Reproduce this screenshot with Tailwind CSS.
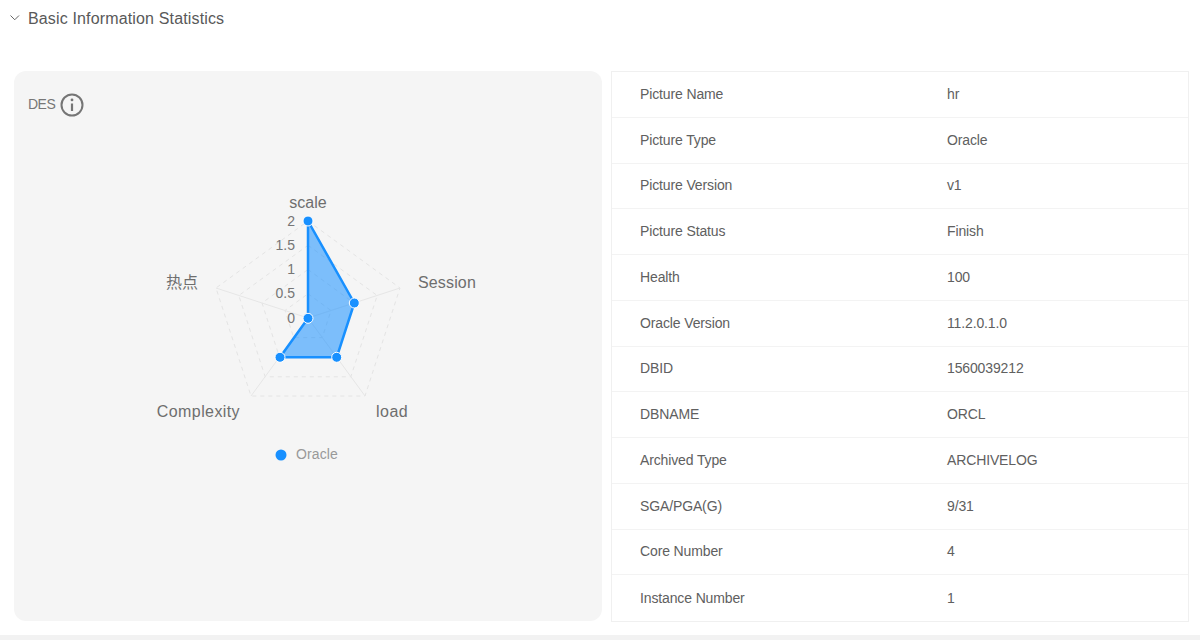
<!DOCTYPE html>
<html lang="en">
<head>
  <meta charset="UTF-8">
  <title>Basic Information Statistics</title>
  <script src="https://cdn.jsdelivr.net/npm/@tailwindcss/browser@4"></script>
</head>
<body class="bg-white h-[640px] overflow-hidden font-['Liberation_Sans','Noto_Sans_CJK_SC',sans-serif] text-[#595959]">
  <!-- Section header -->
  <div class="h-[37px] flex items-center">
    <svg class="ml-[9px] mb-[2px]" width="11" height="8" viewBox="0 0 11 8" fill="none" stroke="#666666" stroke-width="1"><path d="M1.5 1.5 L5.75 5.75 L10 1.5"/></svg>
    <h2 class="ml-[8px] text-[16px] font-normal tracking-[0.15px]">Basic Information Statistics</h2>
  </div>

  <div class="flex mt-[34px] ml-[14px] w-[1175px] h-[550px] gap-[9px]">
    <!-- Radar panel -->
    <div class="w-[588px] bg-[#f5f5f5] rounded-[12px] shrink-0">
      <div class="flex items-center pl-[14px] pt-[22px] h-[45px]">
        <span class="text-[14px] tracking-[-0.5px] text-[#777]">DES</span>
        <svg class="ml-[5px]" width="24" height="24" viewBox="0 0 24 24" fill="none" stroke="#757575" stroke-width="2"><circle cx="12" cy="12" r="10.5"/><path d="M12 10.5 V18" stroke-width="2.2"/><circle cx="12" cy="6.9" r="1.4" fill="#757575" stroke="none"/></svg>
      </div>
      <svg class="block mt-[14px]" width="588" height="360" viewBox="14 130 588 360">
        <!-- Grid rings -->
        <g fill="none" stroke="#e4e4e4" stroke-width="1" stroke-dasharray="4 4">
          <polygon points="308,293.8 331,310.5 322.3,337.6 293.7,337.6 285,310.5"/>
          <polygon points="308,269.5 354,303 336.5,357.2 279.5,357.2 262,303"/>
          <polygon points="308,245.3 377.2,295.5 350.8,376.8 265.2,376.8 238.8,295.5"/>
          <polygon points="308,221 400,288 365,396 251,396 216,288"/>
        </g>
        <!-- Axes -->
        <g stroke="#e6e6e6" stroke-width="1">
          <path d="M308 318 L308 221"/>
          <path d="M308 318 L400 288"/>
          <path d="M308 318 L365 396"/>
          <path d="M308 318 L251 396"/>
          <path d="M308 318 L216 288"/>
        </g>
        <!-- Data -->
        <polygon points="308,221 354.3,303 336.7,357.3 280,357.3 308,318.3" fill="#1890ff" fill-opacity="0.55" stroke="#1890ff" stroke-width="2.5" stroke-linejoin="round"/>
        <g fill="#1890ff" stroke="#ffffff" stroke-width="1">
          <circle cx="308" cy="221" r="5"/>
          <circle cx="354.3" cy="303" r="5"/>
          <circle cx="336.7" cy="357.3" r="5"/>
          <circle cx="280" cy="357.3" r="5"/>
          <circle cx="308" cy="318.3" r="5"/>
        </g>
        <!-- Scale labels -->
        <g fill="#767676" font-size="14" text-anchor="end">
          <text x="295" y="226">2</text>
          <text x="295" y="250">1.5</text>
          <text x="295" y="274">1</text>
          <text x="295" y="298">0.5</text>
          <text x="295" y="323">0</text>
        </g>
        <!-- Axis labels -->
        <g fill="#6e6e6e" font-size="16">
          <text x="308" y="208" text-anchor="middle">scale</text>
          <text x="418" y="288" letter-spacing="0.15">Session</text>
          <text x="376" y="417" letter-spacing="0.5">load</text>
          <text x="240" y="417" text-anchor="end" letter-spacing="0.4">Complexity</text>
          <text x="198" y="288" text-anchor="end">热点</text>
        </g>
        <!-- Legend -->
        <circle cx="281" cy="455" r="5.5" fill="#1890ff"/>
        <text x="296" y="459" font-size="14" letter-spacing="0.1" fill="#999999">Oracle</text>
      </svg>
    </div>

    <!-- Info table -->
    <div class="w-[578px] h-[551px] shrink-0 border border-[#f0f0f0] grid grid-rows-12 divide-y divide-[#f3f3f3] text-[14px] tracking-[-0.13px] text-[#606060]">
      <div class="flex items-center pl-[28px]"><span class="w-[307px]">Picture Name</span><span>hr</span></div>
      <div class="flex items-center pl-[28px]"><span class="w-[307px]">Picture Type</span><span>Oracle</span></div>
      <div class="flex items-center pl-[28px]"><span class="w-[307px]">Picture Version</span><span>v1</span></div>
      <div class="flex items-center pl-[28px]"><span class="w-[307px]">Picture Status</span><span>Finish</span></div>
      <div class="flex items-center pl-[28px]"><span class="w-[307px]">Health</span><span>100</span></div>
      <div class="flex items-center pl-[28px]"><span class="w-[307px]">Oracle Version</span><span>11.2.0.1.0</span></div>
      <div class="flex items-center pl-[28px]"><span class="w-[307px]">DBID</span><span>1560039212</span></div>
      <div class="flex items-center pl-[28px]"><span class="w-[307px]">DBNAME</span><span>ORCL</span></div>
      <div class="flex items-center pl-[28px]"><span class="w-[307px]">Archived Type</span><span>ARCHIVELOG</span></div>
      <div class="flex items-center pl-[28px]"><span class="w-[307px]">SGA/PGA(G)</span><span>9/31</span></div>
      <div class="flex items-center pl-[28px]"><span class="w-[307px]">Core Number</span><span>4</span></div>
      <div class="flex items-center pl-[28px]"><span class="w-[307px]">Instance Number</span><span>1</span></div>
    </div>
  </div>

  <div class="mt-[14px] h-[5px] bg-[#f2f2f2]"></div>
</body>
</html>
